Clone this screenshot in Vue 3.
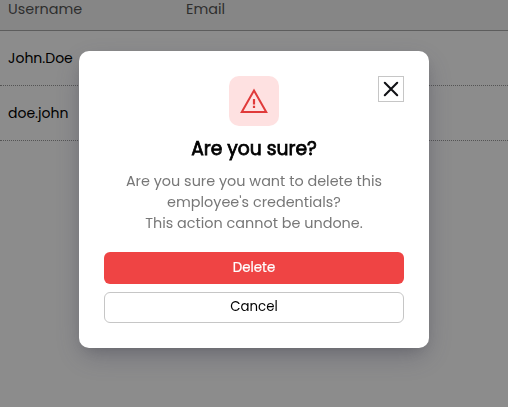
<script setup>
const users = ['John.Doe', 'doe.john']
</script>

<template>
  <div class="page">
    <div class="row head"><span class="username">Username</span><span class="email">Email</span></div>
    <div v-for="user in users" :key="user" class="row"><span class="name">{{ user }}</span></div>
    <div class="overlay">
      <section class="modal" role="dialog" aria-modal="true">
        <div class="badge">
          <svg width="28" height="26" viewBox="0 0 28 26" fill="none" stroke="#e03a3a">
            <path d="M14 2.6 L26.2 23.9 H1.8 Z" stroke-width="2" />
            <path d="M14 11 V16.4 M14 17.8 V20" stroke-width="2.2" />
          </svg>
        </div>
        <button class="close" aria-label="Close">
          <svg width="16" height="16" viewBox="0 0 16 16" fill="none" stroke="#111216" stroke-width="2.1" stroke-linecap="round">
            <path d="M1.8 1.8 L14.2 14.2 M14.2 1.8 L1.8 14.2" />
          </svg>
        </button>
        <h2>Are you sure?</h2>
        <p>
          Are you sure you want to delete this<br />
          employee's credentials?<br />
          This action cannot be undone.
        </p>
        <button class="btn delete">Delete</button>
        <button class="btn cancel">Cancel</button>
      </section>
    </div>
  </div>
</template>

<style>
body { overflow: hidden; }
</style>
<style scoped>
* { box-sizing: border-box; }
.page {
  height: 407px;
  background: #fff;
  color: #000;
  font-family: Poppins, Inter, sans-serif;
  font-size: 14px;
}
.row {
  display: flex;
  align-items: center;
  height: 55px;
  padding-left: 8px;
  border-bottom: 1px dotted #999;
}
.head {
  height: 31px;
  padding-bottom: 12px;
  background: #f5f5f5;
  border-bottom: 1px solid #aaa;
  color: #555;
  font-size: 14.4px;
}
.username { width: 178px; }
.overlay {
  position: fixed;
  inset: 0;
  background: rgba(0, 0, 0, 0.45);
  padding: 51px 79px 59px;
}
.modal {
  position: relative;
  display: flex;
  flex-direction: column;
  align-items: center;
  height: 297px;
  padding: 25px;
  background: #fff;
  border-radius: 10px;
  box-shadow: 0 10px 28px -2px rgba(45, 45, 75, 0.28), 0 6px 16px -6px rgba(0, 0, 0, 0.2);
}
.badge {
  display: flex;
  align-items: center;
  justify-content: center;
  width: 50px;
  height: 50px;
  flex: none;
  border-radius: 10px;
  background: #fee1e1;
}
.close {
  position: absolute;
  top: 25px;
  right: 25px;
  display: flex;
  align-items: center;
  justify-content: center;
  width: 26px;
  height: 26px;
  padding: 0;
  border: 1px solid #c6c6c6;
  background: #fff;
}
h2 {
  margin: 9px 0 0;
  font-size: 18.72px;
  font-weight: 400;
  -webkit-text-stroke: 0.75px #000;
  line-height: 27px;
}
p {
  margin: 9px 0 0;
  font-size: 14.4px;
  line-height: 21px;
  color: #777;
  text-align: center;
  white-space: nowrap;
}
.btn {
  display: flex;
  align-items: center;
  justify-content: center;
  width: 100%;
  height: 32px;
  flex: none;
  margin-top: 18px;
  padding: 0 0 1px;
  border: 0;
  border-radius: 6px;
  font: 400 13.333px Poppins, Inter, sans-serif;
}
.delete {
  background: #ef4444;
  color: #fff;
  -webkit-text-stroke: 0.2px #fff;
}
.cancel {
  height: 31px;
  margin-top: 8px;
  border: 1px solid #c6c6c6;
  background: #fff;
  color: #000;
  padding-bottom: 2px;
}
</style>
